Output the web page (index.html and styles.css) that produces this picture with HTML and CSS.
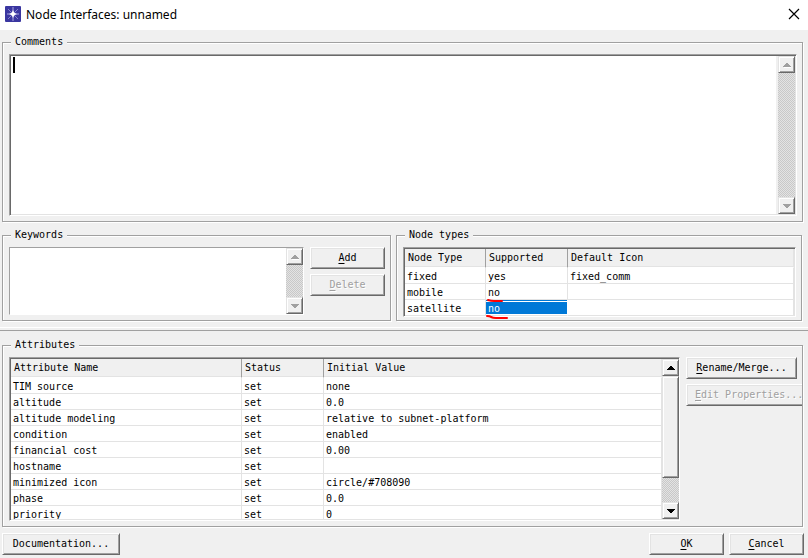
FILE: index.html
```html
<!DOCTYPE html>
<html lang="en">
<head>
<meta charset="utf-8">
<title>Node Interfaces: unnamed</title>
<link rel="stylesheet" href="styles.css">
</head>
<body>
<header class="titlebar">
  <svg class="app-icon" viewBox="0 0 16 16" aria-hidden="true">
    <rect width="16" height="16" rx="1" fill="#3a36a0"/>
    <path d="M8 1v14M2 8h12" stroke="#a9a6de" stroke-width="1"/>
    <path d="M3 3l10 10M13 3L3 13" stroke="#8380cc" stroke-width="1"/>
    <path d="M8 4l1.2 2.8L12 8 9.200 9.200 8 12 6.800 9.200 4 8l2.800-1.200z" fill="#fff"/>
  </svg>
  <h1 class="title">Node Interfaces: unnamed</h1>
  <button class="close" type="button" aria-label="Close">
    <svg viewBox="0 0 12 12" aria-hidden="true"><path d="M1 1l10 10M11 1L1 11" stroke="#000" stroke-width="1.200"/></svg>
  </button>
</header>
<main class="dialog">
  <fieldset class="group">
    <legend><label for="comments">Comments</label></legend>
    <div class="well comments">
      <textarea id="comments" class="text"></textarea>
      <span class="caret"></span>
      <div class="scroll scroll-inset">
        <button class="arrow" type="button" disabled aria-label="Scroll up"><svg viewBox="0 0 8 4"><path class="edge" d="M1 4h7v1H1z"/><path d="M3 0h2v1h1v1h1v1h1v1H0V3h1V2h1V1h1z"/></svg></button>
        <div class="track"></div>
        <button class="arrow" type="button" disabled aria-label="Scroll down"><svg viewBox="0 0 8 4"><path d="M0 0h8v1H7v1H6v1H5v1H3V3H2V2H1V1H0z"/></svg></button>
      </div>
    </div>
  </fieldset>

  <div class="middle">
    <fieldset class="group keywords">
      <legend>Keywords</legend>
      <div class="split">
        <div class="well flat list">
          <div class="text"></div>
          <div class="scroll">
            <button class="arrow" type="button" disabled aria-label="Scroll up"><svg viewBox="0 0 8 4"><path class="edge" d="M1 4h7v1H1z"/><path d="M3 0h2v1h1v1h1v1h1v1H0V3h1V2h1V1h1z"/></svg></button>
            <div class="track"></div>
            <button class="arrow" type="button" disabled aria-label="Scroll down"><svg viewBox="0 0 8 4"><path d="M0 0h8v1H7v1H6v1H5v1H3V3H2V2H1V1H0z"/></svg></button>
          </div>
        </div>
        <div class="actions">
          <button class="btn" type="button"><u>A</u>dd</button>
          <button class="btn" type="button" disabled><u>D</u>elete</button>
        </div>
      </div>
    </fieldset>
    <fieldset class="group types">
      <legend>Node types</legend>
      <div class="well type-list">
        <table class="grid">
          <colgroup><col class="c-type"><col class="c-supported"><col></colgroup>
          <thead><tr><th>Node Type</th><th>Supported</th><th>Default Icon</th></tr></thead>
          <tbody>
            <tr><td>fixed</td><td>yes</td><td>fixed_comm</td></tr>
            <tr><td>mobile</td><td>no</td><td></td></tr>
            <tr><td>satellite</td><td class="selected">no<svg class="marks" viewBox="0 0 24 22" aria-hidden="true"><path d="M2 3q3 1 6 1h8M1 19q3 0 4 1 2 1 5 1h11" fill="none" stroke="#ff0000" stroke-width="2" stroke-linecap="round"/></svg></td><td></td></tr>
          </tbody>
        </table>
      </div>
    </fieldset>
  </div>

  <div class="divider"></div>

  <fieldset class="group attributes">
    <legend>Attributes</legend>
    <div class="split">
      <div class="well attribute-list">
        <div class="viewport">
          <table class="grid">
            <colgroup><col class="c-name"><col class="c-status"><col></colgroup>
            <thead><tr><th>Attribute Name</th><th>Status</th><th>Initial Value</th></tr></thead>
            <tbody>
              <tr><td>TIM source</td><td>set</td><td>none</td></tr>
              <tr><td>altitude</td><td>set</td><td>0.0</td></tr>
              <tr><td>altitude modeling</td><td>set</td><td>relative to subnet-platform</td></tr>
              <tr><td>condition</td><td>set</td><td>enabled</td></tr>
              <tr><td>financial cost</td><td>set</td><td>0.00</td></tr>
              <tr><td>hostname</td><td>set</td><td></td></tr>
              <tr><td>minimized icon</td><td>set</td><td>circle/#708090</td></tr>
              <tr><td>phase</td><td>set</td><td>0.0</td></tr>
              <tr><td>priority</td><td>set</td><td>0</td></tr>
            </tbody>
          </table>
        </div>
        <div class="scroll">
          <button class="arrow" type="button" aria-label="Scroll up"><svg viewBox="0 0 8 4"><path d="M3 0h2v1h1v1h1v1h1v1H0V3h1V2h1V1h1z"/></svg></button>
          <div class="track"><div class="thumb"></div></div>
          <button class="arrow" type="button" aria-label="Scroll down"><svg viewBox="0 0 8 4"><path d="M0 0h8v1H7v1H6v1H5v1H3V3H2V2H1V1H0z"/></svg></button>
        </div>
      </div>
      <div class="actions">
        <button class="btn" type="button"><u>R</u>ename/Merge...</button>
        <button class="btn wide" type="button" disabled><u>E</u>dit Properties...</button>
      </div>
    </div>
  </fieldset>
</main>
<footer class="footer">
  <button class="btn docs" type="button">Documentation...</button>
  <button class="btn" type="button"><u>O</u>K</button>
  <button class="btn" type="button"><u>C</u>ancel</button>
</footer>
</body>
</html>
```
FILE: styles.css
```css
* { box-sizing: border-box; }

body {
  margin: 0;
  min-height: 100vh;
  display: flex;
  flex-direction: column;
  background: #f0f0f0;
  color: #000;
  font: 10px/14px "DejaVu Sans Mono", "Liberation Mono", monospace;
}

button, textarea { font: inherit; color: inherit; }

.titlebar {
  display: flex;
  align-items: center;
  height: 30px;
  padding: 0 8px 0 5px;
  background: #fff;
}
.app-icon { width: 16px; height: 16px; margin-bottom: 2px; }
.title {
  flex: 1;
  margin: 0 0 0 5px;
  font: 12px/18px "Noto Sans", "Open Sans", sans-serif;
}
.close {
  display: flex;
  padding: 0;
  border: 0;
  background: none;
}
.close svg { width: 12px; height: 12px; margin-bottom: 2px; }

.dialog {
  flex: 1;
  display: flex;
  flex-direction: column;
  padding-top: 5px;
}

.group {
  min-width: 0;
  margin: 0 5px 0 2px;
  padding: 5px 5px 5px 6px;
  border: 1px solid #a0a0a0;
  box-shadow: 1px 1px 0 #fff, inset 1px 1px 0 #fff;
}
.group legend {
  margin-left: 2px;
  padding: 0 4px;
  background: #f0f0f0;
}

.well {
  position: relative;
  display: flex;
  background: #fff;
  border: 1px solid;
  border-color: #a0a0a0 #fff #fff #a0a0a0;
  box-shadow: inset 1px 1px 0 #696969, inset -1px -1px 0 #e3e3e3;
  padding: 1px;
}
.well.flat { box-shadow: none; padding: 0; }
.text { flex: 1; min-width: 0; }
textarea.text {
  margin: 0;
  padding: 2px 4px;
  border: 0;
  outline: 0;
  resize: none;
  background: transparent;
}
.comments { height: 162px; }
.caret {
  position: absolute;
  left: 3px;
  top: 2px;
  width: 2px;
  height: 16px;
  background: #000;
}

.scroll { display: flex; flex-direction: column; width: 17px; }
.scroll-inset { width: 19px; border-left: 2px solid #f0f0f0; }
.track {
  flex: 1;
  background: repeating-conic-gradient(#c8c8c8 0 25%, #e3e3e3 0 50%) 0 0 / 2px 2px;
}
.arrow, .thumb, .btn {
  background: #f0f0f0;
  border: 1px solid;
  border-color: #e3e3e3 #696969 #696969 #e3e3e3;
  border-radius: 0;
  box-shadow: inset 1px 1px 0 #fff, inset -1px -1px 0 #a0a0a0;
}
.arrow {
  display: flex;
  align-items: center;
  justify-content: center;
  height: 17px;
  padding: 0;
}
.arrow svg { width: 8px; height: 4px; overflow: visible; }
.arrow:disabled path { fill: #a0a0a0; }
.arrow:disabled .edge { fill: #fff; }
.thumb { height: 81%; }

.btn {
  height: 22px;
  padding: 0 9px;
  line-height: 14px;
  text-align: center;
  white-space: nowrap;
  border-color: #fff #696969 #696969 #fff;
  box-shadow: inset 1px 1px 0 #e3e3e3, inset -1px -1px 0 #a0a0a0;
}
.btn:disabled { color: #a0a0a0; text-shadow: 1px 1px 0 #fff; }
u { text-underline-offset: 2px; }

.middle {
  display: grid;
  grid-template-columns: 391fr 417fr;
  margin-top: 6px;
}
.keywords { margin-right: 0; padding-right: 5px; }
.types { margin: 0 6px 0 5px; padding-bottom: 3px; }
.split { display: flex; gap: 6px; }
.list { flex: 1; height: 68px; }
.type-list { padding-bottom: 0; }
.actions { display: flex; flex-direction: column; gap: 5px; }
.keywords .actions { width: 75px; }

.grid {
  width: 100%;
  table-layout: fixed;
  border-collapse: separate;
  border-spacing: 0;
}
.grid th, .grid td {
  padding: 0 3px;
  text-align: left;
  font-weight: normal;
  white-space: nowrap;
}
.grid th {
  height: 19px;
  padding-bottom: 1px;
  background: #f0f0f0;
  border-right: 1px solid #a0a0a0;
  border-bottom: 1px solid #fff;
  box-shadow: inset 0 -1px 0 #e3e3e3;
}
.grid td {
  height: 16px;
  padding: 3px 2px 0;
  line-height: 12px;
  border-right: 1px solid #e3e3e3;
  border-bottom: 1px solid #e3e3e3;
}
.grid th:last-child { border-right-color: #e3e3e3; }
.c-type { width: 81px; }
.c-supported { width: 82px; }
.c-name { width: 231px; }
.c-status { width: 82px; }
.grid .selected {
  position: relative;
  background: #0078d7;
  color: #fff;
  border-right-color: #fff;
  box-shadow: inset 0 1px 0 #0078d7, inset 0 2px 0 #fff, inset 0 -1px 0 #fff;
}
.marks {
  position: absolute;
  left: 0;
  top: -3px;
  width: 24px;
  height: 22px;
  overflow: visible;
}

.divider {
  height: 4px;
  margin-top: 6px;
  border-top: 1px solid #fff;
  border-bottom: 1px solid #a0a0a0;
}

.attributes { flex: 1; margin-top: 7px; padding-right: 0; }
.attribute-list { flex: 1; min-width: 0; height: 164px; padding-right: 0; }
.viewport { flex: 1; min-width: 0; overflow: hidden; }
.attributes .actions { width: 116px; overflow: hidden; }
.attributes .btn { margin-right: 5px; }
.attributes .wide { align-self: flex-start; margin-right: 0; padding: 0 8px; }

.footer {
  display: flex;
  gap: 5px;
  padding: 6px 4px 3px 2px;
}
.footer .btn { width: 75px; }
.footer .docs { width: 118px; margin-right: auto; }
```
